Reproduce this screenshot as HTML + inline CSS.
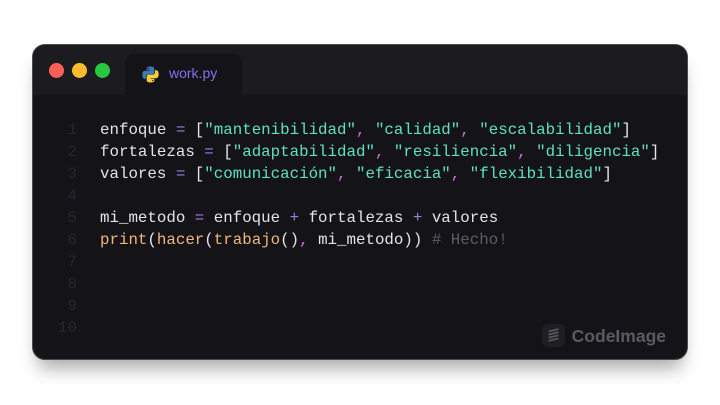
<!DOCTYPE html><html><head><meta charset="utf-8"><style>
*{margin:0;padding:0;box-sizing:border-box}
body{width:720px;height:405px;background:#fff;position:relative;overflow:hidden;font-family:"Liberation Mono",monospace}
.win{position:absolute;left:32px;top:44px;width:656px;height:316px;background:#141418;border:1.5px solid #4a4a50;border-radius:13px;overflow:hidden;box-shadow:0 14px 18px -6px rgba(0,0,0,.35)}
.hdr{position:absolute;left:0;top:0;width:100%;height:50px;background:#1b1b20}
.dot{position:absolute;top:18px;width:15px;height:15px;border-radius:50%}
.tab{position:absolute;left:92px;top:9px;width:117px;height:41px;background:#141418;border-radius:9px 9px 0 0}
.tab span{position:absolute;left:44px;top:11px;font-family:"Liberation Sans",sans-serif;font-size:14px;color:#8b6cf0}
.code{position:absolute;left:0;top:74px;font-size:15.8px;line-height:22px;white-space:pre;color:#e4e4e7}
.ln{position:absolute;left:20px;width:24px;text-align:right;color:#262630}
.tx{position:absolute;left:67px}
.o{color:#9f7aea}.s{color:#5fe0c2}.c{color:#d16dd8}.f{color:#f2b77a}.g{color:#5c5c66}
.logo{position:absolute;right:21px;bottom:10px;font-family:"Liberation Sans",sans-serif;font-weight:bold;font-size:17.5px;color:#5a5a62}
</style></head><body>
<div class="win">
<div class="hdr"></div>
<div class="dot" style="left:16px;background:#ff5f57"></div>
<div class="dot" style="left:39px;background:#febc2e"></div>
<div class="dot" style="left:62px;background:#28c840"></div>
<div class="tab"><svg style="position:absolute;left:17px;top:12px" width="17" height="17" viewBox="0 0 16 16"><path d="M7.9 0.5C4 0.5 4.3 2.2 4.3 2.2V4h3.7v.5H2.8S0.3 4.2 0.3 8.2s2.2 3.8 2.2 3.8H3.8V10.1s-.1-2.2 2.1-2.2h3.6s2.1 0 2.1-2V2.5S11.9 0.5 7.9 0.5zM5.9 1.6a.7.7 0 1 1 0 1.4.7.7 0 0 1 0-1.4z" fill="#3d7ab8"/><path d="M8.1 15.5c3.9 0 3.6-1.7 3.6-1.7V12H8v-.5h5.2s2.5.3 2.5-3.7-2.2-3.8-2.2-3.8h-1.3v1.9s.1 2.2-2.1 2.2H6.5s-2.1 0-2.1 2v3.4s-.3 2 3.7 2zm2-1.1a.7.7 0 1 1 0-1.4.7.7 0 0 1 0 1.4z" fill="#f7cc3d"/></svg><span>work.py</span></div>
<div class="code">
<div class="ln" style="top:0">1</div><div class="ln" style="top:22px">2</div><div class="ln" style="top:44px">3</div><div class="ln" style="top:66px">4</div><div class="ln" style="top:88px">5</div><div class="ln" style="top:110px">6</div><div class="ln" style="top:132px">7</div><div class="ln" style="top:154px">8</div><div class="ln" style="top:176px">9</div><div class="ln" style="top:198px">10</div>
<div class="tx" style="top:0">enfoque <span class="o">=</span> [<span class="s">"mantenibilidad"</span><span class="c">,</span> <span class="s">"calidad"</span><span class="c">,</span> <span class="s">"escalabilidad"</span>]</div>
<div class="tx" style="top:22px">fortalezas <span class="o">=</span> [<span class="s">"adaptabilidad"</span><span class="c">,</span> <span class="s">"resiliencia"</span><span class="c">,</span> <span class="s">"diligencia"</span>]</div>
<div class="tx" style="top:44px">valores <span class="o">=</span> [<span class="s">"comunicación"</span><span class="c">,</span> <span class="s">"eficacia"</span><span class="c">,</span> <span class="s">"flexibilidad"</span>]</div>
<div class="tx" style="top:88px">mi_metodo <span class="o">=</span> enfoque <span class="o">+</span> fortalezas <span class="o">+</span> valores</div>
<div class="tx" style="top:110px"><span class="f">print</span>(<span class="f">hacer</span>(<span class="f">trabajo</span>()<span class="c">,</span> mi_metodo)) <span class="g"># Hecho!</span></div>
</div>
<div class="logo"><span style="display:inline-block;width:23px;height:23px;background:#1e1e23;border-radius:6px;vertical-align:middle;margin-right:7px;position:relative;top:-2px"><svg width="23" height="23" viewBox="0 0 22 22"><path d="M7 7l8-2M7 10l8-2M7 13l8-2M7 16l8-2" stroke="#55555d" stroke-width="1.8" stroke-linecap="round"/></svg></span>CodeImage</div>
</div>
</body></html>
